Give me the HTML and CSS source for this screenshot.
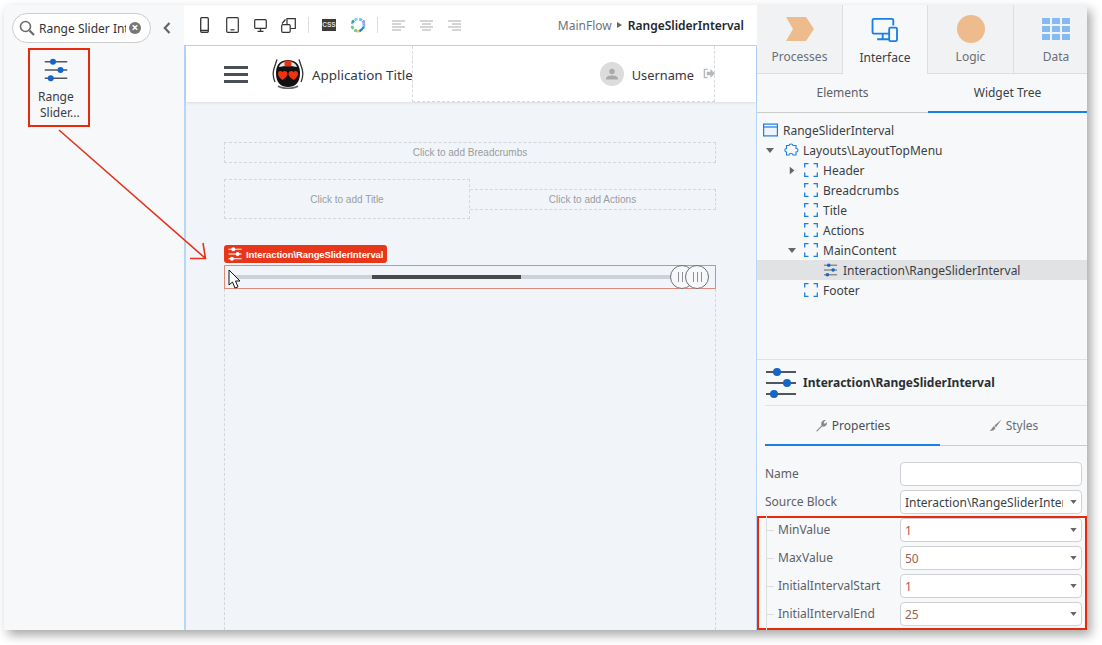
FILE: index.html
```html
<!DOCTYPE html>
<html lang="en">
<head>
    <meta charset="UTF-8">
    <title>RangeSliderInterval</title>
    <link rel="stylesheet" href="styles.css">
</head>
<body>

<svg class="defs" width="0" height="0">
    <symbol id="sliders" viewBox="0 0 32 32">
        <path d="M1 5H31M1 16H31M1 27H31" stroke="#50565b" stroke-width="2" fill="none"/>
        <circle cx="12" cy="5" r="4" fill="#1565c8"/>
        <circle cx="22" cy="16" r="4" fill="#1565c8"/>
        <circle cx="9" cy="27" r="4" fill="#1565c8"/>
    </symbol>
    <symbol id="bracket" viewBox="0 0 14 14">
        <path d="M.7 4.500V.7H4.500M9.500 .7H13.300V4.500M13.300 9.500V13.300H9.500M4.500 13.300H.7V9.500" stroke="#1a7fe8" stroke-width="1.300" fill="none"/>
    </symbol>
    <symbol id="caret" viewBox="0 0 8 5">
        <path d="M0 0H8L4 5Z" fill="#666"/>
    </symbol>
</svg>

<div class="window">
    <!-- toolbox -->
    <div class="toolbox">
        <div class="search-row">
            <div class="search">
                <svg class="search-icon" viewBox="0 0 16 16"><circle cx="6.500" cy="6.500" r="5" fill="none" stroke="#6b6b6b" stroke-width="1.600"/><path d="M10.500 10.500L15 15" stroke="#6b6b6b" stroke-width="2.200"/></svg>
                <span class="search-text">Range Slider Interval</span>
                <span class="search-clear">×</span>
            </div>
            <svg class="collapse" viewBox="0 0 8 12"><path d="M6.500 1L1.800 6L6.500 11" fill="none" stroke="#666" stroke-width="2.200"/></svg>
        </div>
        <div class="tool-item">
            <svg class="tool-icon"><use href="#sliders"/></svg>
            <span>Range</span>
            <span class="tool-second">Slider...</span>
        </div>
    </div>

    <!-- canvas -->
    <div class="center">
        <div class="toolbar">
            <svg class="tb tb-phone" viewBox="0 0 9 16"><rect x=".7" y=".7" width="7.600" height="14.600" rx="1" fill="none" stroke="#333" stroke-width="1.300"/><path d="M1 13.500H8" stroke="#333" stroke-width="1.500"/></svg>
            <svg class="tb tb-tablet" viewBox="0 0 13 16"><rect x=".7" y=".7" width="11.600" height="14.600" rx="1" fill="none" stroke="#333" stroke-width="1.200"/><path d="M4.500 12.800H8.500" stroke="#333" stroke-width="1.200"/></svg>
            <svg class="tb tb-desktop" viewBox="0 0 13 13"><rect x=".7" y=".7" width="11.600" height="8.600" rx="1" fill="none" stroke="#333" stroke-width="1.200"/><path d="M6.500 9.500V12M3.500 12.300H9.500" stroke="#333" stroke-width="1.300"/></svg>
            <svg class="tb tb-multi" viewBox="0 0 15 15"><rect x=".7" y="6.700" width="8.500" height="7.600" rx="1" fill="none" stroke="#333" stroke-width="1.200"/><path d="M6 6V.7H14.300V10.500H9.500M1 5.500L4.500 1.500" fill="none" stroke="#333" stroke-width="1.200"/></svg>
            <span class="tb-sep"></span>
            <span class="css-badge">CSS</span>
            <svg class="tb tb-ring" viewBox="0 0 16 16">
                <circle cx="8" cy="8" r="6" fill="none" stroke="#6cc9ef" stroke-width="2.600" stroke-dasharray="3 1.800"/>
                <path d="M2 9A6 6 0 0 0 7 14" fill="none" stroke="#79c98d" stroke-width="2.600" stroke-dasharray="3 1.500"/>
                <path d="M2.500 5.500A6 6 0 0 1 4 3.500" fill="none" stroke="#2e9f8f" stroke-width="2.600"/>
                <path d="M13 3.500A6 6 0 0 1 14 8" fill="none" stroke="#a98ce0" stroke-width="2.600" stroke-dasharray="2.500 1.500"/>
                <path d="M7.500 14.500L9.500 14" stroke="#f3c84b" stroke-width="2.400"/>
                <path d="M9.500 14.500L14 10" stroke="#1a7fe8" stroke-width="1.800"/>
            </svg>
            <span class="tb-sep tb-sep2"></span>
            <svg class="tb tb-align" viewBox="0 0 13 11"><path d="M0 1H13M0 4H9M0 7H13M0 10H9" stroke="#aaa"/></svg>
            <svg class="tb tb-align" viewBox="0 0 13 11"><path d="M0 1H13M2 4H11M0 7H13M2 10H11" stroke="#aaa"/></svg>
            <svg class="tb tb-align" viewBox="0 0 13 11"><path d="M0 1H13M4 4H13M0 7H13M4 10H13" stroke="#aaa"/></svg>
            <div class="crumb">
                <span class="crumb-flow">MainFlow</span>
                <span class="crumb-arrow"></span>
                <span class="crumb-page">RangeSliderInterval</span>
            </div>
        </div>

        <div class="preview">
            <div class="app-header">
                <div class="app-left">
                    <div class="burger"><i></i><i></i><i></i></div>
                    <svg class="logo" viewBox="0 0 32 32">
                        <path d="M5 1.500L2.500 9C.5 14 .8 19 3 24M27 1.500L29.500 9C31.500 14 31.200 19 29 24" fill="none" stroke="#333" stroke-width="1.300"/>
                        <path d="M4 15C4 5 10 2 16 2S28 5 28 15C28 25 23 29 16 29S4 25 4 15Z" fill="#111"/>
                        <path d="M7 9C8 5 12 3.500 16 3.500S24 5 25 9C20 7.500 12 7.500 7 9Z" fill="#e4e4e4"/>
                        <rect x="12.500" y="2.500" width="7" height="6" fill="#e2321a"/>
                        <path d="M10.500 14C9 12.300 5.500 13 6 16.500C6.300 18.500 9 21 10.500 22C12 21 15.200 18.500 15.500 16.500C16 13 12 12.300 10.500 14Z" fill="#f0330f"/>
                        <path d="M21.500 14C20 12.300 16 13 16.500 16.500C16.800 18.500 20 21 21.500 22C23 21 25.700 18.500 26 16.500C26.500 13 23 12.300 21.500 14Z" fill="#f0330f"/>
                        <path d="M6 28C10 31 22 31 26 28" fill="none" stroke="#666" stroke-width="1.600"/>
                    </svg>
                    <span class="app-title">Application Title</span>
                </div>
                <div class="app-menu">
                    <div class="avatar">
                        <svg viewBox="0 0 12 12"><circle cx="6" cy="3.500" r="2.700" fill="#a9a9a9"/><path d="M0 11.500C0 8 3 7.500 6 7.500S12 8 12 11.500Z" fill="#a9a9a9"/></svg>
                    </div>
                    <span class="username">Username</span>
                    <svg class="logout" viewBox="0 0 13 11"><path d="M5 1H1.500V10H5" fill="none" stroke="#b4b8bd" stroke-width="1.500"/><path d="M4 3.500H8V.5L13 5.500L8 10.500V7.500H4Z" fill="#b4b8bd"/></svg>
                </div>
            </div>

            <div class="canvas">
                <div class="drop drop-crumbs">Click to add Breadcrumbs</div>
                <div class="title-row">
                    <div class="drop drop-title">Click to add Title</div>
                    <div class="drop drop-actions">Click to add Actions</div>
                </div>
                <div class="widget-tag">
                    <svg viewBox="0 0 32 32"><path d="M1 5H31M1 16H31M1 27H31" stroke="#fff" stroke-width="2.500"/><circle cx="12" cy="5" r="4.500" fill="#fff"/><circle cx="22" cy="16" r="4.500" fill="#fff"/><circle cx="9" cy="27" r="4.500" fill="#fff"/></svg>
                    Interaction\RangeSliderInterval
                </div>
                <div class="slider-box">
                    <div class="slider-track">
                        <div class="slider-range"></div>
                    </div>
                    <div class="thumb thumb-a"><i></i><i></i><i></i></div>
                    <div class="thumb thumb-b"><i></i><i></i><i></i></div>
                    <svg class="cursor" viewBox="0 0 13 20"><path d="M1 1V16L4.500 13L7 19L10 17.800L7.500 12H12Z" fill="#fff" stroke="#111"/></svg>
                </div>
                <div class="drop-main"></div>
            </div>
        </div>
    </div>

    <!-- right side panel -->
    <div class="side">
        <div class="main-tabs">
            <div class="main-tab">
                <svg class="main-icon" viewBox="0 0 28 24"><path d="M0 0H20L28 12L20 24H0L7 12Z" fill="#eebb8c"/></svg>
                Processes
            </div>
            <div class="main-tab active">
                <svg class="main-icon" viewBox="0 0 29 26"><path d="M19 17H2.500C1.500 17 1 16.500 1 15.500V2.500C1 1.500 1.500 1 2.500 1H22C23 1 23.500 1.500 23.500 2.500V8M6 23H19M12 17V23" fill="none" stroke="#1a7fe8" stroke-width="2"/><rect x="19" y="10.500" width="8.500" height="14.500" rx="1.500" fill="none" stroke="#1a7fe8" stroke-width="2"/></svg>
                Interface
            </div>
            <div class="main-tab">
                <span class="logic-dot"></span>
                Logic
            </div>
            <div class="main-tab">
                <svg class="main-icon" viewBox="0 0 28 22"><path d="M0 0H8V6H0ZM10 0H18V6H10ZM20 0H28V6H20ZM0 8H8V14H0ZM10 8H18V14H10ZM20 8H28V14H20ZM0 16H8V22H0ZM10 16H18V22H10ZM20 16H28V22H20Z" fill="#85b9f2"/></svg>
                Data
            </div>
        </div>
        <div class="sub-tabs">
            <div class="sub-tab">Elements</div>
            <div class="sub-tab active">Widget Tree</div>
        </div>

        <div class="tree">
            <div class="tree-row lvl-0">
                <svg class="node-icon" viewBox="0 0 15 13"><rect x=".6" y=".6" width="13.800" height="11.800" fill="#eef5fd" stroke="#1a7fe8" stroke-width="1.200"/><path d="M1 3.500H14" stroke="#1a7fe8" stroke-width="1.200"/></svg>
                RangeSliderInterval
            </div>
            <div class="tree-row lvl-1">
                <svg class="caret"><use href="#caret"/></svg>
                <svg class="node-icon node-puzzle" viewBox="0 0 15 14"><path d="M5 2.500C5 .5 9 .5 9 2.500H12V5.500C14.700 5.500 14.700 9 12 9V12H9C9 10 5 10 5 12H2.500V9C.3 9 .3 5.500 2.500 5.500V2.500Z" fill="none" stroke="#1a7fe8" stroke-width="1.100"/></svg>
                Layouts\LayoutTopMenu
            </div>
            <div class="tree-row lvl-2">
                <svg class="caret caret-closed"><use href="#caret"/></svg>
                <svg class="node-icon bracket"><use href="#bracket"/></svg>
                Header
            </div>
            <div class="tree-row lvl-2">
                <span class="caret"></span>
                <svg class="node-icon bracket"><use href="#bracket"/></svg>
                Breadcrumbs
            </div>
            <div class="tree-row lvl-2">
                <span class="caret"></span>
                <svg class="node-icon bracket"><use href="#bracket"/></svg>
                Title
            </div>
            <div class="tree-row lvl-2">
                <span class="caret"></span>
                <svg class="node-icon bracket"><use href="#bracket"/></svg>
                Actions
            </div>
            <div class="tree-row lvl-2">
                <svg class="caret"><use href="#caret"/></svg>
                <svg class="node-icon bracket"><use href="#bracket"/></svg>
                MainContent
            </div>
            <div class="tree-row lvl-3 selected">
                <svg class="node-icon"><use href="#sliders"/></svg>
                Interaction\RangeSliderInterval
            </div>
            <div class="tree-row lvl-2">
                <span class="caret"></span>
                <svg class="node-icon bracket"><use href="#bracket"/></svg>
                Footer
            </div>
        </div>

        <div class="props">
            <div class="props-head">
                <svg class="props-icon"><use href="#sliders"/></svg>
                Interaction\RangeSliderInterval
            </div>
            <div class="props-tabs">
                <div class="props-tab active">
                    <svg class="props-tab-icon" viewBox="0 0 12 12"><path d="M1 11L6 6C5 3 7 .5 10 1L8 3L9 4.500L11 3C11.500 6 9 7.500 6.500 7L2 11.500Z" fill="#888"/></svg>
                    Properties
                </div>
                <div class="props-tab">
                    <svg class="props-tab-icon" viewBox="0 0 12 12"><path d="M11.500 .5L5 6L6.500 7.500ZM4.500 6.500L6 8C5 10.500 3 11 .5 11C2 10 3 8 4.500 6.500Z" fill="#888"/></svg>
                    Styles
                </div>
            </div>
            <div class="form">
                <div class="field">
                    <label>Name</label>
                    <div class="input"></div>
                </div>
                <div class="field">
                    <label>Source Block</label>
                    <div class="input select"><span class="input-text dark">Interaction\RangeSliderInterval</span><svg class="select-caret"><use href="#caret"/></svg></div>
                </div>
                <div class="params">
                    <div class="field param">
                        <label>MinValue</label>
                        <div class="input select"><span class="input-text">1</span><svg class="select-caret"><use href="#caret"/></svg></div>
                    </div>
                    <div class="field param">
                        <label>MaxValue</label>
                        <div class="input select"><span class="input-text">50</span><svg class="select-caret"><use href="#caret"/></svg></div>
                    </div>
                    <div class="field param">
                        <label>InitialIntervalStart</label>
                        <div class="input select"><span class="input-text">1</span><svg class="select-caret"><use href="#caret"/></svg></div>
                    </div>
                    <div class="field param">
                        <label>InitialIntervalEnd</label>
                        <div class="input select"><span class="input-text">25</span><svg class="select-caret"><use href="#caret"/></svg></div>
                    </div>
                </div>
            </div>
        </div>
    </div>
</div>

<!-- arrow drawn on top of the screenshot -->
<svg class="annotation" viewBox="0 0 1102 645">
    <path d="M59 130L205 258M190 258.500L205.500 258.500L203 243" fill="none" stroke="#e8321a" stroke-width="1.600"/>
</svg>

</body>
</html>
```

FILE: styles.css
```css
html, body {
    margin: 0;
    padding: 0;
    background-color: #fff;
}
body {
    font-family: "Noto Sans", "Open Sans", sans-serif;
    font-size: 12px;
    color: #3a3f45;
    width: 1102px;
    height: 645px;
    overflow: hidden;
    position: relative;
}
.defs {
    position: absolute;
}
.window {
    display: flex;
    width: 1083px;
    height: 625px;
    margin: 5px 0 0 4px;
    background-color: #f7f8fa;
    box-shadow: 4px 5px 10px rgba(0, 0, 0, 0.35);
}

/* toolbox */
.toolbox {
    width: 180px;
    flex: none;
    padding: 8px 0 0 8px;
    box-sizing: border-box;
}
.search-row {
    display: flex;
    align-items: center;
}
.search {
    width: 139px;
    height: 30px;
    box-sizing: border-box;
    border: 1px solid #ccc;
    border-radius: 15px;
    background-color: #fff;
    display: flex;
    align-items: center;
    padding-left: 6px;
}
.search-icon {
    width: 16px;
    height: 16px;
    flex: none;
    margin-right: 4px;
}
.search-text {
    width: 87px;
    overflow: hidden;
    white-space: nowrap;
    color: #333;
}
.search-clear {
    width: 12px;
    height: 12px;
    line-height: 11px;
    border-radius: 50%;
    background-color: #777;
    color: #fff;
    font-size: 12px;
    font-weight: bold;
    text-align: center;
    margin-left: 3px;
    flex: none;
}
.collapse {
    width: 8px;
    height: 12px;
    margin-left: 12px;
}
.tool-item {
    width: 62px;
    height: 79px;
    box-sizing: border-box;
    border: 2px solid #e8290a;
    margin: 5px 0 0 16px;
    display: flex;
    flex-direction: column;
    align-items: flex-start;
    line-height: 16px;
    color: #3a3f45;
    padding-left: 8px;
}
.tool-icon {
    width: 24px;
    height: 24px;
    margin: 8px 0 7px 6px;
    flex: none;
}
.tool-second {
    margin-left: 2px;
}

/* toolbar */
.center {
    width: 573px;
    flex: none;
    display: flex;
    flex-direction: column;
}
.toolbar {
    height: 40px;
    flex: none;
    background-color: #fff;
    display: flex;
    align-items: center;
    padding-left: 16px;
}
.tb {
    flex: none;
    display: block;
}
.tb-phone {
    width: 9px;
    height: 16px;
    margin-right: 17px;
}
.tb-tablet {
    width: 13px;
    height: 16px;
    margin-right: 15px;
}
.tb-desktop {
    width: 13px;
    height: 13px;
    margin-right: 14px;
}
.tb-multi {
    width: 15px;
    height: 15px;
}
.tb-sep {
    width: 1px;
    height: 16px;
    flex: none;
    background-color: #ddd;
    margin: 0 13px 0 12px;
}
.tb-sep2 {
    margin: 0 14px 0 11px;
}
.css-badge {
    width: 14px;
    height: 12px;
    flex: none;
    background-color: #3c3c3c;
    color: #ddd;
    font-family: "Liberation Sans", sans-serif;
    font-size: 6.500px;
    font-weight: bold;
    line-height: 12px;
    text-align: center;
    margin-right: 14px;
}
.tb-ring {
    width: 16px;
    height: 16px;
}
.tb-align {
    width: 13px;
    height: 11px;
    margin-right: 15px;
}
.crumb {
    margin-left: auto;
    padding-right: 13px;
    display: flex;
    align-items: center;
}
.crumb-flow {
    color: #6e7378;
}
.crumb-arrow {
    width: 0;
    height: 0;
    border-left: 5px solid #666;
    border-top: 3.500px solid transparent;
    border-bottom: 3.500px solid transparent;
    margin: 0 6px 0 5px;
}
.crumb-page {
    color: #23272c;
    font-weight: 600;
}

/* preview area */
.preview {
    flex: 1;
    min-height: 0;
    background-color: #f1f5f9;
    border: 1px solid #b6d6f8;
    border-left-width: 2px;
    border-bottom: none;
    display: flex;
    flex-direction: column;
}
.app-header {
    height: 56px;
    flex: none;
    background-color: #fff;
    box-shadow: 0 1px 3px rgba(0, 0, 0, 0.1);
    display: flex;
    padding: 0 41px 0 38px;
}
.app-left {
    width: 188px;
    flex: none;
    display: flex;
    align-items: center;
    overflow: hidden;
    white-space: nowrap;
}
.burger {
    width: 24px;
    margin-right: 24px;
    flex: none;
}
.burger i {
    display: block;
    height: 3px;
    background-color: #4a5056;
    margin: 4px 0;
}
.logo {
    width: 32px;
    height: 32px;
    flex: none;
    margin-right: 8px;
}
.app-title {
    font-size: 13.400px;
    color: #2f3a44;
    padding-top: 2px;
}
.app-menu {
    flex: 1;
    border: 1px dashed #d6dade;
    border-top: none;
    display: flex;
    align-items: center;
    justify-content: flex-end;
}
.avatar {
    width: 24px;
    height: 24px;
    border-radius: 50%;
    background-color: #dcdcdc;
    display: flex;
    align-items: center;
    justify-content: center;
}
.avatar svg {
    width: 12px;
    height: 12px;
}
.username {
    font-size: 12.800px;
    color: #3b3340;
    margin: 0 9px 0 8px;
    padding-top: 2px;
}
.logout {
    width: 12px;
    height: 11px;
    margin-right: -1px;
}
.canvas {
    flex: 1;
    min-height: 0;
    padding: 40px 40px 0 38px;
    display: flex;
    flex-direction: column;
}
.drop {
    box-sizing: border-box;
    border: 1px dashed #d3d7db;
    font-family: "Liberation Sans", sans-serif;
    font-size: 10px;
    color: #9a9c9f;
    display: flex;
    align-items: center;
    justify-content: center;
}
.drop-crumbs {
    height: 21px;
    flex: none;
}
.title-row {
    display: flex;
    align-items: center;
    margin-top: 16px;
    flex: none;
}
.drop-title {
    width: 246px;
    height: 40px;
}
.drop-actions {
    flex: 1;
    height: 21px;
    border-left: none;
}
.widget-tag {
    align-self: flex-start;
    width: 163px;
    height: 18px;
    box-sizing: border-box;
    margin-top: 26px;
    border-radius: 3px;
    background-color: #e8361a;
    color: #fff;
    font-family: "Liberation Sans", sans-serif;
    font-size: 9.500px;
    font-weight: bold;
    letter-spacing: -0.1px;
    white-space: nowrap;
    display: flex;
    align-items: center;
    padding-left: 4px;
    flex: none;
}
.widget-tag svg {
    width: 14px;
    height: 14px;
    margin-right: 4px;
    flex: none;
}
.slider-box {
    height: 24px;
    flex: none;
    box-sizing: border-box;
    margin-top: 2px;
    border: 1px solid #e08a7c;
    position: relative;
    display: flex;
    align-items: center;
    padding: 0 0 0 8px;
}
.slider-box::before {
    content: "";
    position: absolute;
    left: 8px;
    right: 8px;
    top: 9px;
    border-top: 1px dashed #c2c5ca;
}
.slider-track {
    width: 437px;
    height: 4px;
    background-color: #cdd1d9;
    position: relative;
}
.slider-range {
    position: absolute;
    left: 139px;
    width: 149px;
    top: 0;
    bottom: 0;
    background-color: #4a4a4a;
}
.thumb {
    position: absolute;
    top: -1px;
    width: 24px;
    height: 24px;
    box-sizing: border-box;
    border: 1px solid #6f6f73;
    border-radius: 50%;
    background-color: #f6f8fa;
    display: flex;
    align-items: center;
    justify-content: center;
    gap: 3px;
}
.thumb i {
    width: 1px;
    height: 10px;
    background-color: #8e9297;
}
.thumb-a {
    left: 445px;
}
.thumb-b {
    left: 460px;
}
.cursor {
    position: absolute;
    left: 3px;
    top: 3px;
    width: 13px;
    height: 20px;
}
.drop-main {
    flex: 1;
    border: 1px dashed #d3d7db;
    border-top: none;
    border-bottom: none;
}

/* right side panel */
.side {
    width: 330px;
    flex: none;
    display: flex;
    flex-direction: column;
}
.main-tabs {
    height: 69px;
    flex: none;
    display: flex;
}
.main-tab {
    width: 86px;
    box-sizing: border-box;
    background-color: #f1f2f4;
    border-bottom: 1px solid #dcdee0;
    border-right: 1px solid #dcdee0;
    display: flex;
    flex-direction: column;
    align-items: center;
    justify-content: flex-end;
    padding-bottom: 8px;
    color: #6a6f75;
    line-height: 17px;
}
.main-tab.active {
    width: 85px;
    background-color: #f7f8fa;
    border-bottom: none;
    color: #3a3f45;
}
.main-tab:last-child {
    width: 73px;
    border-right: none;
    padding-left: 11px;
}
.main-icon {
    width: 28px;
    height: 24px;
    margin-bottom: 7px;
}
.logic-dot {
    width: 28px;
    height: 28px;
    border-radius: 50%;
    background-color: #eebb8c;
    margin-bottom: 5px;
}
.sub-tabs {
    height: 39px;
    flex: none;
    display: flex;
}
.sub-tab {
    flex: 1;
    display: flex;
    align-items: center;
    justify-content: center;
    border-bottom: 1px solid #ccc;
    color: #5c6167;
    box-sizing: border-box;
}
.sub-tab:first-child {
    flex: none;
    width: 171px;
    padding-bottom: 1px;
}
.sub-tab.active {
    border-bottom: 2px solid #1a7fe8;
    color: #3a3f45;
}
.tree {
    height: 247px;
    flex: none;
    box-sizing: border-box;
    padding-top: 7px;
    border-bottom: 1px solid #e0e2e4;
}
.tree-row {
    height: 20px;
    display: flex;
    align-items: center;
    white-space: nowrap;
}
.lvl-0 {
    padding-left: 6px;
}
.lvl-1 {
    padding-left: 9px;
}
.lvl-2 {
    padding-left: 31px;
}
.lvl-3 {
    padding-left: 66px;
}
.selected {
    background-color: #e1e2e3;
}
.caret {
    width: 8px;
    height: 5px;
    flex: none;
    margin-right: 8px;
}
.lvl-1 .caret {
    margin-right: 10px;
}
.caret-closed {
    transform: rotate(-90deg);
}
.node-icon {
    width: 15px;
    height: 14px;
    flex: none;
    margin-right: 5px;
}
.node-puzzle {
    margin-right: 4px;
}
.bracket {
    width: 14px;
    height: 14px;
}
.props {
    flex: 1;
    min-height: 0;
    display: flex;
    flex-direction: column;
}
.props-head {
    height: 46px;
    flex: none;
    margin-left: 8px;
    box-sizing: border-box;
    border-bottom: 1px solid #e0e2e4;
    display: flex;
    align-items: center;
    font-weight: 700;
    color: #2b2f33;
}
.props-icon {
    width: 32px;
    height: 32px;
    margin-right: 6px;
}
.props-tabs {
    height: 40px;
    flex: none;
    margin-left: 8px;
    display: flex;
}
.props-tab {
    flex: 1;
    box-sizing: border-box;
    display: flex;
    align-items: center;
    justify-content: center;
    border-bottom: 1px solid #ccc;
    color: #6a6f75;
}
.props-tab.active {
    flex: none;
    width: 175px;
    border-bottom: 2px solid #1a7fe8;
    color: #4a4f55;
}
.props-tab-icon {
    width: 13px;
    height: 13px;
    margin-right: 4px;
}
.form {
    padding-top: 16px;
}
.field {
    height: 24px;
    display: flex;
    align-items: center;
    justify-content: space-between;
    margin-bottom: 4px;
    padding: 0 5px 0 8px;
    color: #5c6167;
}
.field label {
    white-space: nowrap;
    margin-bottom: 2px;
}
.input {
    width: 182px;
    height: 24px;
    box-sizing: border-box;
    border: 1px solid #cfd1d4;
    border-radius: 4px;
    background-color: #fff;
    display: flex;
    align-items: center;
    padding-left: 4px;
    flex: none;
}
.input-text {
    flex: 1;
    min-width: 0;
    overflow: hidden;
    white-space: nowrap;
    color: #a0604f;
}
.input-text.dark {
    color: #3a3f45;
}
.select-caret {
    width: 7px;
    height: 4px;
    flex: none;
    margin: 0 4px 0 7px;
}
.params {
    height: 114px;
    box-sizing: border-box;
    border: 2px solid #e8290a;
    margin-top: -2px;
}
.param {
    padding: 0 3px 0 19px;
    position: relative;
}
.param::before {
    content: "";
    position: absolute;
    left: 7px;
    top: -4px;
    bottom: -4px;
    border-left: 1px solid #dcdee0;
}
.param::after {
    content: "";
    position: absolute;
    left: 7px;
    top: 12px;
    width: 8px;
    border-top: 1px solid #dcdee0;
}
.annotation {
    position: absolute;
    left: 0;
    top: 0;
    width: 1102px;
    height: 645px;
    pointer-events: none;
}
```
